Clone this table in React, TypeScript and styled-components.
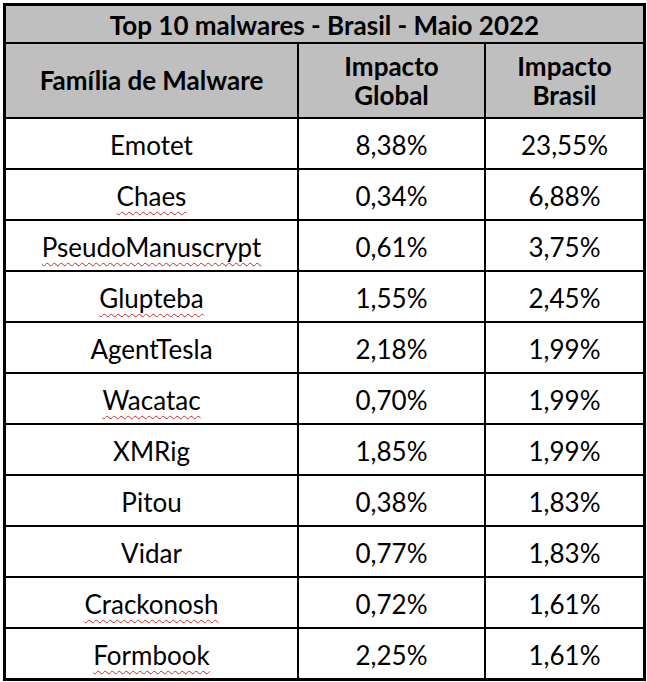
import React from "react";
import styled, { createGlobalStyle } from "styled-components";

const Global = createGlobalStyle`
  html, body { margin: 0; padding: 0; background: #ffffff; }
  body { font-family: Lato, "Open Sans", sans-serif; color: #000; }
`;

const Table = styled.div`
  display: grid;
  grid-template-columns: 291px 185px 157px;
  grid-template-rows: 36px 73px repeat(11, 49px);
  gap: 2px;
  width: fit-content;
  margin: 3px 0 0 3px;
  background: #000;
  border: 3px solid #000;
`;

const Cell = styled.div<{ $head?: boolean; $span?: number }>`
  grid-column: ${(p) => (p.$span ? `span ${p.$span}` : "auto")};
  display: flex;
  align-items: center;
  justify-content: center;
  text-align: center;
  background: ${(p) => (p.$head ? "#bfbfbf" : "#ffffff")};
  font-weight: ${(p) => (p.$head ? 700 : 400)};
  font-size: 26px;
  line-height: 29px;
  padding-top: ${(p) => (p.$head ? "0" : "4px")};
  box-sizing: border-box;
`;

const Title = styled(Cell)`
  font-size: 26px;
  padding-top: 2px;
`;

const Name = styled.span<{ $err?: boolean }>`
  text-decoration: ${(p) => (p.$err ? "underline wavy #c42b2b" : "none")};
  text-decoration-thickness: 1px;
  text-underline-offset: 5px;
`;

const rows: [string, string, string, boolean][] = [
  ["Emotet", "8,38%", "23,55%", false],
  ["Chaes", "0,34%", "6,88%", true],
  ["PseudoManuscrypt", "0,61%", "3,75%", true],
  ["Glupteba", "1,55%", "2,45%", true],
  ["AgentTesla", "2,18%", "1,99%", false],
  ["Wacatac", "0,70%", "1,99%", true],
  ["XMRig", "1,85%", "1,99%", false],
  ["Pitou", "0,38%", "1,83%", false],
  ["Vidar", "0,77%", "1,83%", false],
  ["Crackonosh", "0,72%", "1,61%", true],
  ["Formbook", "2,25%", "1,61%", true],
];

export default function App() {
  return (
    <>
      <Global />
      <Table>
        <Title $head $span={3}>Top 10 malwares - Brasil - Maio 2022</Title>
        <Cell $head>Família de Malware</Cell>
        <Cell $head>Impacto<br />Global</Cell>
        <Cell $head>Impacto<br />Brasil</Cell>
        {rows.map(([n, g, b, err]) => (
          <React.Fragment key={n}>
            <Cell>
              <Name $err={err}>{n}</Name>
            </Cell>
            <Cell>{g}</Cell>
            <Cell>{b}</Cell>
          </React.Fragment>
        ))}
      </Table>
    </>
  );
}
